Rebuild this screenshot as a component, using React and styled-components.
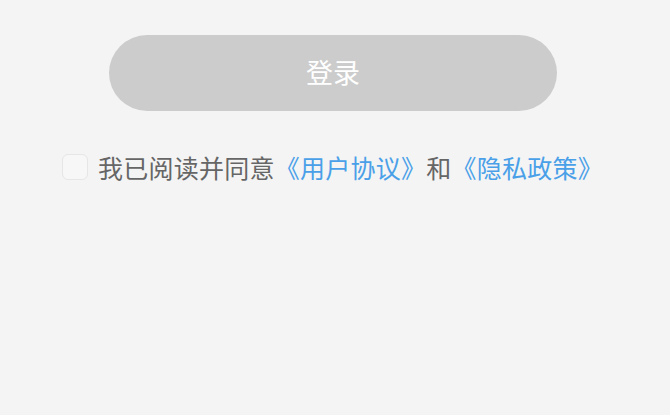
import React, { useState } from 'react';
import styled, { createGlobalStyle } from 'styled-components';

const GlobalStyle = createGlobalStyle`
  html, body {
    margin: 0;
    padding: 0;
    background: #f4f4f4;
    font-family: "Noto Sans CJK SC", "Liberation Sans", sans-serif;
  }
`;

const Page = styled.div`
  width: 670px;
  height: 415px;
  background: #f4f4f4;
  padding-top: 35px;
  box-sizing: border-box;
`;

const LoginButton = styled.button`
  display: block;
  width: 448px;
  height: 76px;
  margin: 0 0 0 109px;
  padding: 0 0 4px;
  border: none;
  border-radius: 38px;
  background: ${(p) => (p.active ? '#4aa0e8' : '#cccccc')};
  color: #ffffff;
  font-family: inherit;
  font-size: 27px;
  cursor: pointer;
`;

const Agreement = styled.label`
  display: flex;
  align-items: center;
  margin: 38px 0 0 62px;
  font-size: 25px;
  letter-spacing: 0.25px;
  color: #666666;
  line-height: 36px;
`;

const Box = styled.span`
  width: 24px;
  height: 24px;
  border: 1px solid #e6e6e6;
  border-radius: 6px;
  background: ${(p) => (p.checked ? '#4aa0e8' : '#f7f7f7')};
  margin-right: 10px;
  flex-shrink: 0;
`;

const Link = styled.span`
  color: #4aa0e8;
`;

const App = () => {
  const [checked, setChecked] = useState(false);
  return (
    <>
      <GlobalStyle />
      <Page>
        <LoginButton active={checked ? 1 : 0}>登录</LoginButton>
        <Agreement onClick={() => setChecked(!checked)}>
          <Box checked={checked} />
          <span>
            我已阅读并同意<Link>《用户协议》</Link>和<Link>《隐私政策》</Link>
          </span>
        </Agreement>
      </Page>
    </>
  );
};

export default App;
